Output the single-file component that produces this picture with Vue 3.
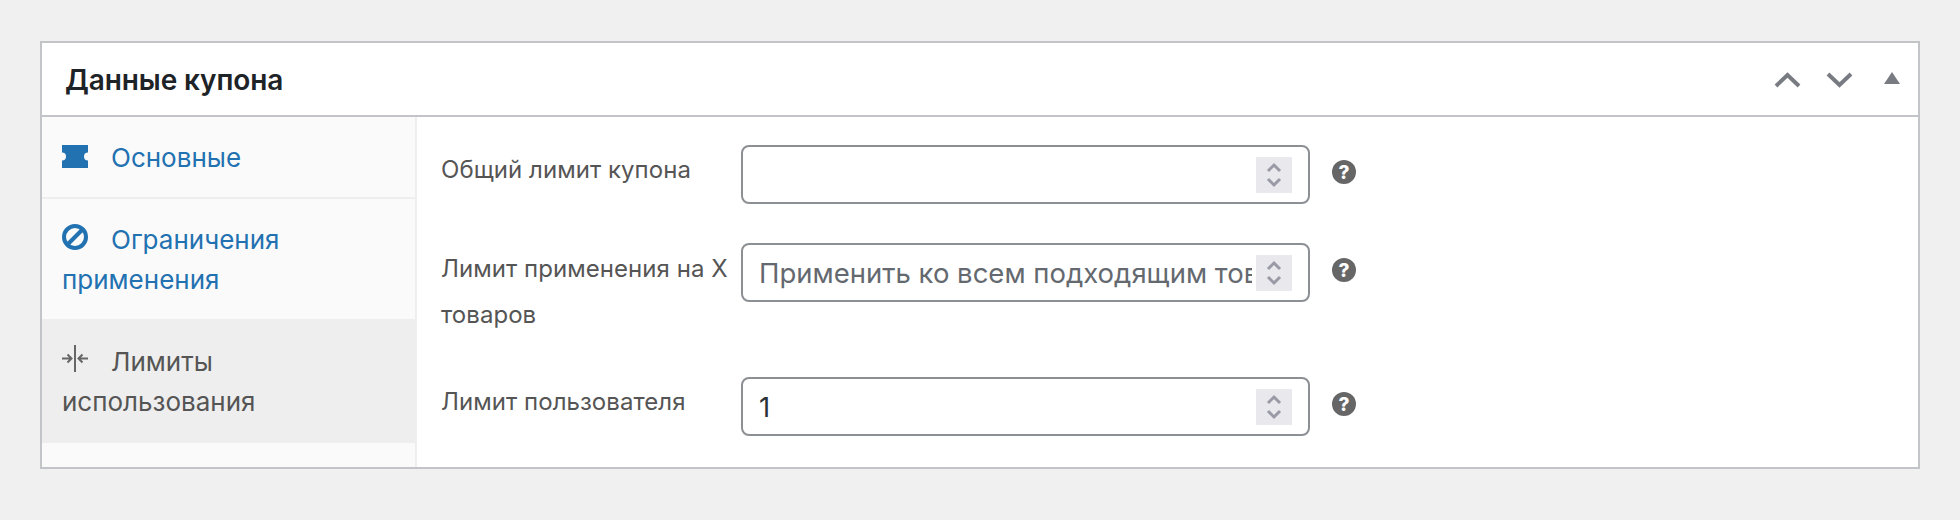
<template>
  <div class="page">
    <section class="panel">
      <header class="panel-head">
        <h2 class="panel-title">Данные купона</h2>
        <div class="handles">
          <svg class="handle" width="27" height="16" viewBox="0 0 27 16"><path d="M2 14 13.5 3 25 14" /></svg>
          <svg class="handle" width="27" height="16" viewBox="0 0 27 16"><path d="M2 2 13.5 13 25 2" /></svg>
          <svg class="toggle" width="16" height="12" viewBox="0 0 16 12"><path d="M8 0 16 12H0Z" /></svg>
        </div>
      </header>
      <div class="panel-body">
        <ul class="tabs">
          <li class="tab">
            <a class="tab-link">
              <svg class="tab-icon" width="26" height="23" viewBox="0 0 26 23"><path d="M0 0H26V7.5A4 4 0 0 0 26 15.500V23H0V15.500A4 4 0 0 0 0 7.500Z" fill="#2271b1" /></svg>Основные
            </a>
          </li>
          <li class="tab">
            <a class="tab-link">
              <svg class="tab-icon" width="26" height="26" viewBox="0 0 26 26"><circle cx="13" cy="13" r="11" fill="none" stroke="#2271b1" stroke-width="4" /><path d="M6 20 20 6" stroke="#2271b1" stroke-width="4" /></svg>Ограничения применения
            </a>
          </li>
          <li class="tab active">
            <a class="tab-link">
              <svg class="tab-icon" width="26" height="27" viewBox="0 0 26 27"><g fill="none" stroke="#666" stroke-width="2"><path d="M13 0V27" /><path d="M0 13.500H9M5.500 9.500 9.500 13.500 5.500 17.500" /><path d="M26 13.500H17M20.500 9.500 16.500 13.500 20.500 17.500" /></g></svg>Лимиты использования
            </a>
          </li>
        </ul>
        <div class="fields">
          <div v-for="field in fields" :key="field.label" class="field">
            <label class="field-label">{{ field.label }}</label>
            <div class="input-wrap">
              <input class="input" type="text" readonly :value="field.value" :placeholder="field.placeholder" />
              <span class="spinner">
                <svg width="16" height="26" viewBox="0 0 16 26"><path d="M2 9 8 3 14 9M2 17 8 23 14 17" /></svg>
              </span>
            </div>
            <span class="help">?</span>
          </div>
        </div>
      </div>
    </section>
  </div>
</template>

<script setup>
const fields = [
  { label: 'Общий лимит купона', value: '', placeholder: '' },
  { label: 'Лимит применения на X товаров', value: '', placeholder: 'Применить ко всем подходящим товарам' },
  { label: 'Лимит пользователя', value: '1', placeholder: '' },
]
</script>

<style>
body {
  background: #f0f0f1;
}
</style>

<style scoped>
.page {
  padding: 41px 40px 0;
  font-family: Inter, 'Liberation Sans', sans-serif;
  -webkit-font-smoothing: antialiased;
}

.panel {
  background: #fff;
  border: 2px solid #c3c4c7;
}

.panel-head {
  display: flex;
  align-items: center;
  justify-content: space-between;
  box-sizing: border-box;
  height: 74px;
  padding: 2px 18px 0 23px;
  border-bottom: 2px solid #c3c4c7;
}

.panel-title {
  margin: 0;
  font-size: 28px;
  font-weight: 600;
  letter-spacing: -0.1px;
  color: #1d2327;
}

.handles {
  display: flex;
  align-items: flex-start;
  gap: 25px;
  height: 44px;
  padding-top: 27px;
  box-sizing: content-box;
}

.handle path {
  fill: none;
  stroke: #787c82;
  stroke-width: 4;
}

.toggle {
  margin-left: 6px;
  fill: #787c82;
}

.panel-body {
  display: flex;
}

.tabs {
  flex: 0 0 373px;
  margin: 0;
  padding: 0 0 24px;
  list-style: none;
  background: #fafafa;
  border-right: 2px solid #eee;
}

.tab {
  border-bottom: 2px solid #eee;
}

.tab-link {
  display: block;
  padding: 21px 20px 19px;
  font-size: 26px;
  line-height: 40px;
  color: #2271b1;
}

.tab-icon {
  vertical-align: -1px;
  margin-right: 23px;
}

.active {
  background: #eee;
}

.active .tab-link {
  color: #555;
}

.fields {
  flex: 1;
  padding: 28px 24px 30px;
}

.field {
  display: flex;
  align-items: flex-start;
  margin-bottom: 39px;
}

.field:last-child {
  margin-bottom: 0;
}

.field-label {
  flex: 0 0 300px;
  padding: 2px 0 1px;
  font-size: 24px;
  line-height: 46px;
  letter-spacing: 0.05px;
  color: #555;
}

.field:nth-child(2) .field-label {
  padding: 3px 0 0;
}

.input-wrap {
  position: relative;
  flex: 0 0 569px;
}

.input {
  display: block;
  box-sizing: border-box;
  width: 100%;
  height: 59px;
  padding: 0 56px 0 16px;
  border: 2px solid #8c8f94;
  border-radius: 8px;
  outline: none;
  background: #fff;
  font-family: inherit;
  font-size: 27.5px;
  color: #2c3338;
}

.input::placeholder {
  color: #646970;
  opacity: 1;
}

.spinner {
  position: absolute;
  top: 12px;
  right: 18px;
  display: flex;
  align-items: center;
  justify-content: center;
  width: 36px;
  height: 36px;
  background: #e8e8ed;
}

.spinner path {
  fill: none;
  stroke: #9a9aa6;
  stroke-width: 3;
}

.help {
  display: flex;
  align-items: center;
  justify-content: center;
  width: 24px;
  height: 24px;
  margin: 15px 0 0 22px;
  border-radius: 50%;
  background: #666;
  font-size: 19px;
  font-weight: 800;
  color: #fff;
}
</style>
